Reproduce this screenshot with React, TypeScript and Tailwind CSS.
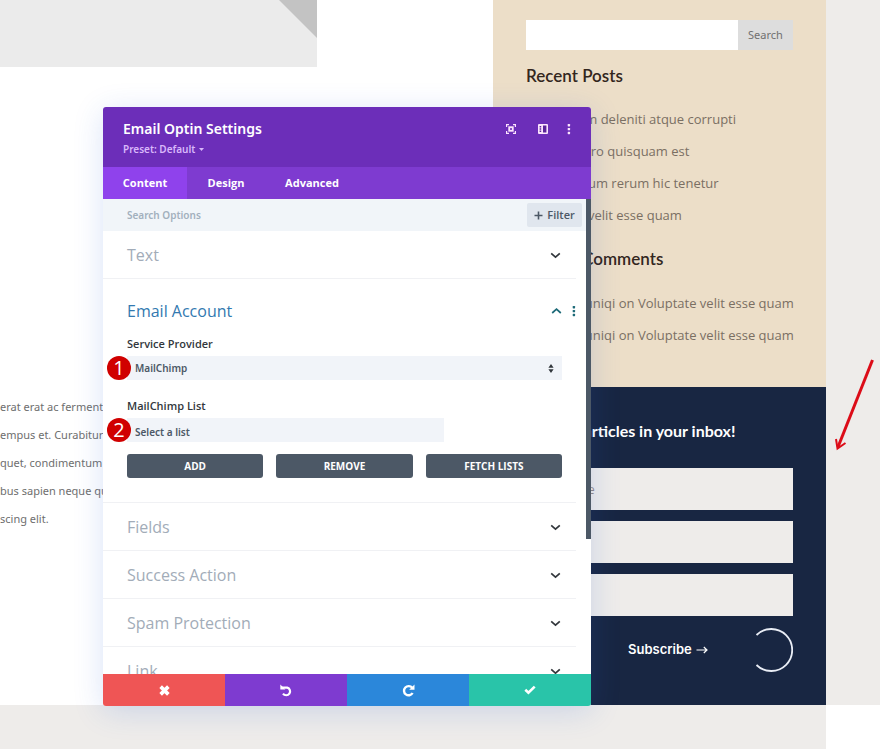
import React, { useState } from "react";
import type { ReactNode } from "react";

const recentPosts = [
  "Voluptatum deleniti atque corrupti",
  "Neque porro quisquam est",
  "Itaque earum rerum hic tenetur",
  "Voluptate velit esse quam",
];

const articleLines = [
  "erat erat ac fermentum",
  "empus et. Curabitur non",
  "quet, condimentum at",
  "bus sapien neque quis",
  "scing elit.",
];

function Chevron({ up = false }: { up?: boolean }) {
  return (
    <svg width="11" height="8" viewBox="0 0 11 8" fill="none" stroke="currentColor" strokeWidth="1.7" aria-hidden="true">
      <path d={up ? "M1.2 6 5.5 2.2 9.8 6" : "M1.2 2.4 5.5 6.2 9.8 2.4"} />
    </svg>
  );
}

function Dots() {
  return (
    <svg width="4" height="12" viewBox="0 0 4 12" fill="currentColor" aria-hidden="true">
      <rect x="0.7" y="1" width="2.4" height="2.4" rx="0.6" />
      <rect x="0.7" y="4.9" width="2.4" height="2.4" rx="0.6" />
      <rect x="0.7" y="8.8" width="2.4" height="2.4" rx="0.6" />
    </svg>
  );
}

function Section({ title }: { title: string }) {
  return (
    <button
      type="button"
      className="flex h-12 w-full shrink-0 items-center justify-between pr-[15px] pl-6 text-left text-base text-[#a2acb8]"
    >
      {title}
      <span className="text-[#32373c]">
        <Chevron />
      </span>
    </button>
  );
}

function Badge({ children }: { children: ReactNode }) {
  return (
    <span className="absolute top-0 -left-5 flex size-6 items-center justify-center rounded-full bg-[#d00000] font-['Open_Sans',sans-serif] text-xl leading-6 text-white">
      {children}
    </span>
  );
}

function Sidebar() {
  return (
    <aside className="flex w-[333px] shrink-0 flex-col">
      <div className="bg-[#ecdec8] px-[33px] pt-5 pb-9 text-[13px] text-[#7a6f63]">
        <form className="flex h-[30px]">
          <input aria-label="Search" type="text" className="min-w-0 flex-1 bg-white px-2 outline-none" />
          <button type="button" className="w-[55px] bg-[#dddddd] font-['Noto_Sans',sans-serif] text-[11px] text-[#707070]">
            Search
          </button>
        </form>
        <h2 className="mt-3.5 font-['Lato',sans-serif] text-[17px] leading-6 font-semibold text-[#33261d]">Recent Posts</h2>
        <ul className="mt-[15px] leading-8 whitespace-nowrap">
          {recentPosts.map((post) => (
            <li key={post}>
              <a href="#">{post}</a>
            </li>
          ))}
        </ul>
        <h2 className="mt-4 font-['Lato',sans-serif] text-[17px] leading-6 font-semibold text-[#33261d]">Recent Comments</h2>
        <ul className="mt-4 leading-8 whitespace-nowrap">
          <li>Donjete Vuniqi on <a href="#">Voluptate velit esse quam</a></li>
          <li>Donjete Vuniqi on <a href="#">Voluptate velit esse quam</a></li>
        </ul>
      </div>
      <form className="flex flex-1 flex-col bg-[#182642] px-[33px] pt-8 pb-[33px] text-white">
        <h2 className="text-center font-['Lato',sans-serif] text-[16px] leading-6 font-bold whitespace-nowrap">
          articles in your inbox!
        </h2>
        <div className="mt-[25px] flex flex-col gap-[11px]">
          <input aria-label="First name" placeholder="First Name" className="h-[42px] bg-[#eeecea] px-2 text-xs text-[#33261d] outline-none" />
          <input aria-label="Last name" className="h-[42px] bg-[#eeecea] px-2 text-xs outline-none" />
          <input aria-label="Email" className="h-[42px] bg-[#eeecea] px-2 text-xs outline-none" />
        </div>
        <div className="mt-3 flex items-center justify-between pl-[102px]">
          <button type="button" className="flex items-center gap-1 font-['Inter',sans-serif] text-[13px] font-semibold">
            Subscribe
            <svg width="12" height="10" viewBox="0 0 12 10" fill="none" stroke="currentColor" strokeWidth="1.2" aria-hidden="true">
              <path d="M0.5 5H11M7.8 2 11 5 7.8 8" />
            </svg>
          </button>
          <svg width="44" height="44" viewBox="0 0 44 44" fill="none" stroke="#e9edf5" strokeWidth="1.8" aria-hidden="true">
            <path d="M7.500 7A21 21 0 1 1 7.500 37" />
          </svg>
        </div>
      </form>
    </aside>
  );
}

function SettingsDialog() {
  const [provider, setProvider] = useState("MailChimp");
  const [list, setList] = useState("Select a list");
  const field =
    "h-6 appearance-none bg-[#f1f4f9] pl-2 font-['Noto_Sans',sans-serif] text-[10px] font-semibold text-[#4c5866] outline-none";
  const action = "h-6 flex-1 rounded-[3px] bg-[#4c5866] text-[10px] font-bold text-white";

  return (
    <section
      role="dialog"
      aria-label="Email Optin Settings"
      className="absolute top-[107px] left-[103px] flex h-[599px] w-[488px] flex-col overflow-hidden rounded-[3px] bg-white shadow-[0_5px_30px_rgba(43,100,218,0.18)]"
    >
      <header className="flex h-[60px] shrink-0 justify-between bg-[#6c2eb9] pt-3 pr-5 pl-5 text-white">
        <div className="font-['Noto_Sans',sans-serif]">
          <h1 className="text-sm leading-5 font-semibold">Email Optin Settings</h1>
          <button type="button" className="flex items-center gap-1 text-[10px] leading-5 font-semibold text-[#d9b8fb]">
            Preset: Default
            <svg width="5" height="3" viewBox="0 0 5 3" fill="currentColor" aria-hidden="true">
              <path d="M0 0H5L2.5 3Z" />
            </svg>
          </button>
        </div>
        <div className="flex h-5 items-center text-[#fbe4fd]">
          <button type="button" aria-label="Expand">
            <svg width="10" height="10" viewBox="0 0 10 10" fill="none" stroke="currentColor" strokeWidth="1.2" aria-hidden="true">
              <path d="M0.6 3V0.6H3M7 0.6H9.4V3M9.4 7V9.4H7M3 9.4H0.6V7" />
              <rect x="3.2" y="3.2" width="3.6" height="3.6" strokeWidth="1.8" />
            </svg>
          </button>
          <button type="button" aria-label="Dock" className="ml-[22px]">
            <svg width="10" height="10" viewBox="0 0 10 10" aria-hidden="true">
              <rect width="10" height="10" rx="1" fill="currentColor" />
              <path d="M5 1.6H8.4V8.4H5ZM1.6 2H3.2V3.4H1.6ZM1.6 4.3H3.2V5.7H1.6ZM1.6 6.6H3.2V8H1.6Z" fill="#5a2399" />
            </svg>
          </button>
          <button type="button" aria-label="More" className="ml-[19px]">
            <Dots />
          </button>
        </div>
      </header>

      <nav className="flex h-8 shrink-0 bg-[#7e3bd0] text-[11px] font-bold text-white">
        <button type="button" className="w-[84px] bg-[#8f42ec]">Content</button>
        <button type="button" className="w-[78px]">Design</button>
        <button type="button" className="w-[94px]">Advanced</button>
      </nav>

      <div className="flex min-h-0 flex-1">
        <div className="flex min-w-0 flex-1 flex-col overflow-hidden">
          <div className="flex h-8 shrink-0 items-center justify-between bg-[#f1f5f9] pr-1 pl-6">
            <input
              aria-label="Search Options"
              placeholder="Search Options"
              className="min-w-0 flex-1 font-['Noto_Sans',sans-serif] text-[10px] font-semibold outline-none placeholder:text-[#a2b0bd]"
            />
            <button type="button" className="flex h-6 w-[55px] items-center justify-center gap-1 rounded-[2px] bg-[#e0e6ee] text-[11px] font-semibold text-[#4c5866]">
              <svg width="9" height="9" viewBox="0 0 9 9" stroke="currentColor" strokeWidth="1.6" aria-hidden="true">
                <path d="M4.5 0.5V8.5M0.5 4.5H8.5" />
              </svg>
              Filter
            </button>
          </div>

          <div className="mr-2.5 flex flex-col divide-y divide-[#f0f1f4]">
            <Section title="Text" />
            <div className="flex h-56 shrink-0 flex-col pt-5 pl-6">
              <div className="flex items-center justify-between">
                <h2 className="text-base leading-6 text-[#3279b0]">Email Account</h2>
                <div className="flex items-center gap-2.5 text-[#1d6a78]">
                  <button type="button" aria-label="Collapse"><Chevron up /></button>
                  <button type="button" aria-label="Section options"><Dots /></button>
                </div>
              </div>
              <div className="mr-3.5 flex flex-col">
                <label htmlFor="provider" className="mt-[13px] text-[11px] leading-4 font-semibold text-[#32373c]">Service Provider</label>
                <div className="relative mt-1 flex">
                  <select id="provider" value={provider} onChange={(e) => setProvider(e.target.value)} className={`${field} w-full`}>
                    <option>MailChimp</option>
                  </select>
                  <svg className="pointer-events-none absolute top-2 right-2" width="6" height="9" viewBox="0 0 6 9" fill="#32373c" aria-hidden="true">
                    <path d="M3 0 5.6 3.8H0.4ZM3 9 0.4 5.2H5.6Z" />
                  </svg>
                  <Badge>1</Badge>
                </div>
                <label htmlFor="list" className="mt-[18px] text-[11px] leading-4 font-semibold text-[#32373c]">MailChimp List</label>
                <div className="relative mt-1 flex">
                  <select id="list" value={list} onChange={(e) => setList(e.target.value)} className={`${field} w-[317px] pt-1`}>
                    <option>Select a list</option>
                  </select>
                  <Badge>2</Badge>
                </div>
                <div className="mt-3 flex gap-[13px]">
                  <button type="button" className={action}>ADD</button>
                  <button type="button" className={action}>REMOVE</button>
                  <button type="button" className={action}>FETCH LISTS</button>
                </div>
              </div>
            </div>
            <Section title="Fields" />
            <Section title="Success Action" />
            <Section title="Spam Protection" />
            <Section title="Link" />
          </div>
        </div>
        <div className="w-[5px] shrink-0">
          <div className="h-[340px] bg-[#4c5866]" />
        </div>
      </div>

      <footer className="grid h-8 shrink-0 grid-cols-4 text-white">
        <button type="button" aria-label="Discard" className="flex items-center justify-center bg-[#ef5555]">
          <svg width="11" height="11" viewBox="0 0 12 12" stroke="currentColor" strokeWidth="4" aria-hidden="true">
            <path d="M1.8 1.8 10.2 10.2M10.2 1.8 1.8 10.2" />
          </svg>
        </button>
        <button type="button" aria-label="Undo" className="flex items-center justify-center bg-[#7e3bd0]">
          <svg width="13" height="13" viewBox="0 0 13 13" fill="none" stroke="currentColor" strokeWidth="2.2" aria-hidden="true">
            <path d="M2 3.6H7.2A3.9 3.9 0 1 1 3 9.6" />
            <path d="M0.3 0.5V5.4H5.4Z" fill="currentColor" stroke="none" />
          </svg>
        </button>
        <button type="button" aria-label="Redo" className="flex items-center justify-center bg-[#2b87da]">
          <svg width="13" height="13" viewBox="0 0 13 13" fill="none" stroke="currentColor" strokeWidth="2.4" aria-hidden="true">
            <path d="M10.2 3.8A4.6 4.6 0 1 0 10.6 9" />
            <path d="M12.5 0.6V5.8H7.2Z" fill="currentColor" stroke="none" />
          </svg>
        </button>
        <button type="button" aria-label="Save" className="flex items-center justify-center bg-[#29c4a9]">
          <svg width="12" height="10" viewBox="0 0 13 10" fill="none" stroke="currentColor" strokeWidth="2.8" aria-hidden="true">
            <path d="M1.4 4.8 4.8 8 11.6 1.4" />
          </svg>
        </button>
      </footer>
    </section>
  );
}

export default function App() {
  return (
    <div className="relative min-h-screen overflow-hidden bg-white font-['Open_Sans',sans-serif]">
      <div className="flex">
        <main className="min-w-0 flex-1">
          <div className="flex h-[67px] w-[317px] justify-end bg-[#ebebeb]">
            <svg width="38" height="38" viewBox="0 0 38 38" fill="#c3c3c3" aria-hidden="true">
              <path d="M0 0H38V38Z" />
            </svg>
          </div>
          <p className="mt-[326px] font-['Noto_Sans',sans-serif] text-[11px] leading-7 whitespace-nowrap text-[#6e6e6e]">
            {articleLines.map((line) => (
              <span key={line} className="block">{line}</span>
            ))}
          </p>
        </main>
        <Sidebar />
        <div className="w-[54px] shrink-0 bg-[#eeecea]" />
      </div>
      <div className="mr-[54px] h-11 bg-[#eeecea]" />
      <SettingsDialog />
      <svg className="absolute top-[355px] left-[830px]" width="50" height="100" viewBox="0 0 50 100" fill="none" stroke="#dc0c18" strokeWidth="3" aria-hidden="true">
        <path d="M42.5 5 8 92" />
        <path d="M6 84 7.5 93.5 15.5 88" strokeWidth="2" />
      </svg>
    </div>
  );
}
